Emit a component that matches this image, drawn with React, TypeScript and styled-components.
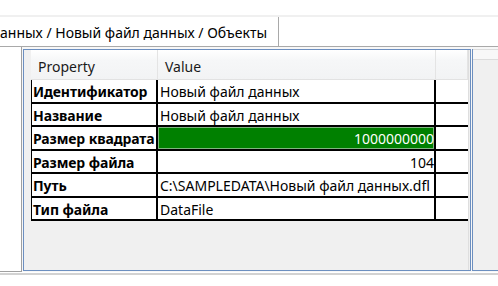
import { Fragment } from "react";
import styled, { createGlobalStyle } from "styled-components";

const GlobalStyle = createGlobalStyle`
  html, body {
    margin: 0;
    padding: 0;
    background: #ffffff;
  }
  * {
    box-sizing: border-box;
  }
  body {
    font-family: "Noto Sans", "Open Sans", sans-serif;
    font-size: 14px;
    color: #000;
  }
`;

const Page = styled.div`
  width: 498px;
  height: 286px;
  display: flex;
  flex-direction: column;
  overflow: hidden;
  background: #ffffff;
`;

const TopGap = styled.div`
  height: 17px;
  border-bottom: 2px solid #f0f0f0;
  flex-shrink: 0;
`;

const TabBar = styled.div`
  height: 30px;
  display: flex;
  align-items: stretch;
  border-bottom: 1px solid #a9a9a9;
  flex-shrink: 0;
`;

const Tab = styled.div`
  width: 279px;
  display: flex;
  align-items: center;
  padding: 2px 0 0 0;
  background: #ffffff;
  border-right: 1px solid #a9a9a9;
  white-space: nowrap;
  overflow: hidden;
  font-size: 14px;
`;

const Body = styled.div`
  height: 225px;
  display: flex;
  padding-top: 2px;
  background: #f7f7f7;
  flex-shrink: 0;
`;

const SidePane = styled.div`
  width: 22px;
  margin-top: -2px;
  background: #ffffff;
  border-right: 1px solid #a0a0a0;
  border-bottom: 1px solid #a0a0a0;
  height: 225px;
`;

const Panel = styled.div`
  width: 448px;
  height: 222px;
  margin-left: 1px;
  display: flex;
  border: 1px solid #6c8fc0;
  background: #f0f0f0;
  padding: 0 1px 0 7px;
`;

const Grid = styled.div`
  flex: 1;
  display: grid;
  grid-template-columns: 127px 278px 32px;
  grid-auto-rows: 23.5px;
  grid-template-rows: 30px;
  align-content: start;
  border-right: 1px solid #dedede;
`;

const HeadCell = styled.div`
  display: flex;
  align-items: center;
  padding: 3px 0 0 7px;
  background: linear-gradient(#ffffff 0%, #f6f7f8 35%, #f2f3f4 100%);
  border-right: 1px solid #e4e4e4;
  border-bottom: 1px solid #e2e2e2;
  color: #1a1a1a;
  font-size: 14px;
`;

const Cell = styled.div<{ $bold?: boolean; $right?: boolean; $first?: boolean; $last?: boolean; $selected?: boolean }>`
  display: flex;
  align-items: center;
  justify-content: ${(p) => (p.$right ? "flex-end" : "flex-start")};
  padding: 2px 0 0 ${(p) => (p.$bold ? "1px" : "2px")};
  background: ${(p) => (p.$selected ? "#008000" : "#ffffff")};
  color: ${(p) => (p.$selected ? "#ffffff" : "#000")};
  font-weight: ${(p) => (p.$bold ? 700 : 400)};
  letter-spacing: ${(p) => (p.$bold ? "-0.1px" : "0")};
  border-bottom: 2px solid #000;
  border-right: ${(p) => (p.$last ? "none" : "2px solid #000")};
  border-left: ${(p) => (p.$first ? "1px solid #000" : "none")};
  box-shadow: ${(p) => (p.$selected ? "inset 0 0 0 1px #7fb57f" : "none")};
  white-space: nowrap;
  overflow: hidden;
  font-size: 14px;
`;

const RightPane = styled.div`
  flex: 1;
  height: 222px;
  margin-left: 1px;
  background: #f0f0f0;
  border-left: 1px solid #6c8fc0;
  border-bottom: 1px solid #6c8fc0;
  display: flex;
  flex-direction: column;
`;

const PaneHead = styled.div`
  height: 11px;
  background: #f8f8f8;
  border-top: 1px solid #dcdcdc;
  border-bottom: 1px solid #dcdcdc;
`;

const BottomLine = styled.div`
  height: 2px;
  margin-top: 1px;
  background: #d2d2d2;
  flex-shrink: 0;
`;

interface IRow {
  name: string;
  value: string;
  right?: boolean;
  selected?: boolean;
}

const rows: IRow[] = [
  { name: "Идентификатор", value: "Новый файл данных" },
  { name: "Название", value: "Новый файл данных" },
  { name: "Размер квадрата", value: "1000000000", right: true, selected: true },
  { name: "Размер файла", value: "104", right: true },
  { name: "Путь", value: "C:\\SAMPLEDATA\\Новый файл данных.dfl" },
  { name: "Тип файла", value: "DataFile" },
];

function App() {
  return (
    <Page>
      <GlobalStyle />
      <TopGap />
      <TabBar>
        <Tab>анных / Новый файл данных / Объекты</Tab>
      </TabBar>
      <Body>
        <SidePane />
        <Panel>
          <Grid>
            <HeadCell>Property</HeadCell>
            <HeadCell>Value</HeadCell>
            <HeadCell />
            {rows.map((row) => (
              <Fragment key={row.name}>
                <Cell $bold $first>
                  {row.name}
                </Cell>
                <Cell $right={row.right} $selected={row.selected}>
                  {row.value}
                </Cell>
                <Cell $last />
              </Fragment>
            ))}
          </Grid>
        </Panel>
        <RightPane>
          <PaneHead />
        </RightPane>
      </Body>
      <BottomLine />
    </Page>
  );
}

export default App;
